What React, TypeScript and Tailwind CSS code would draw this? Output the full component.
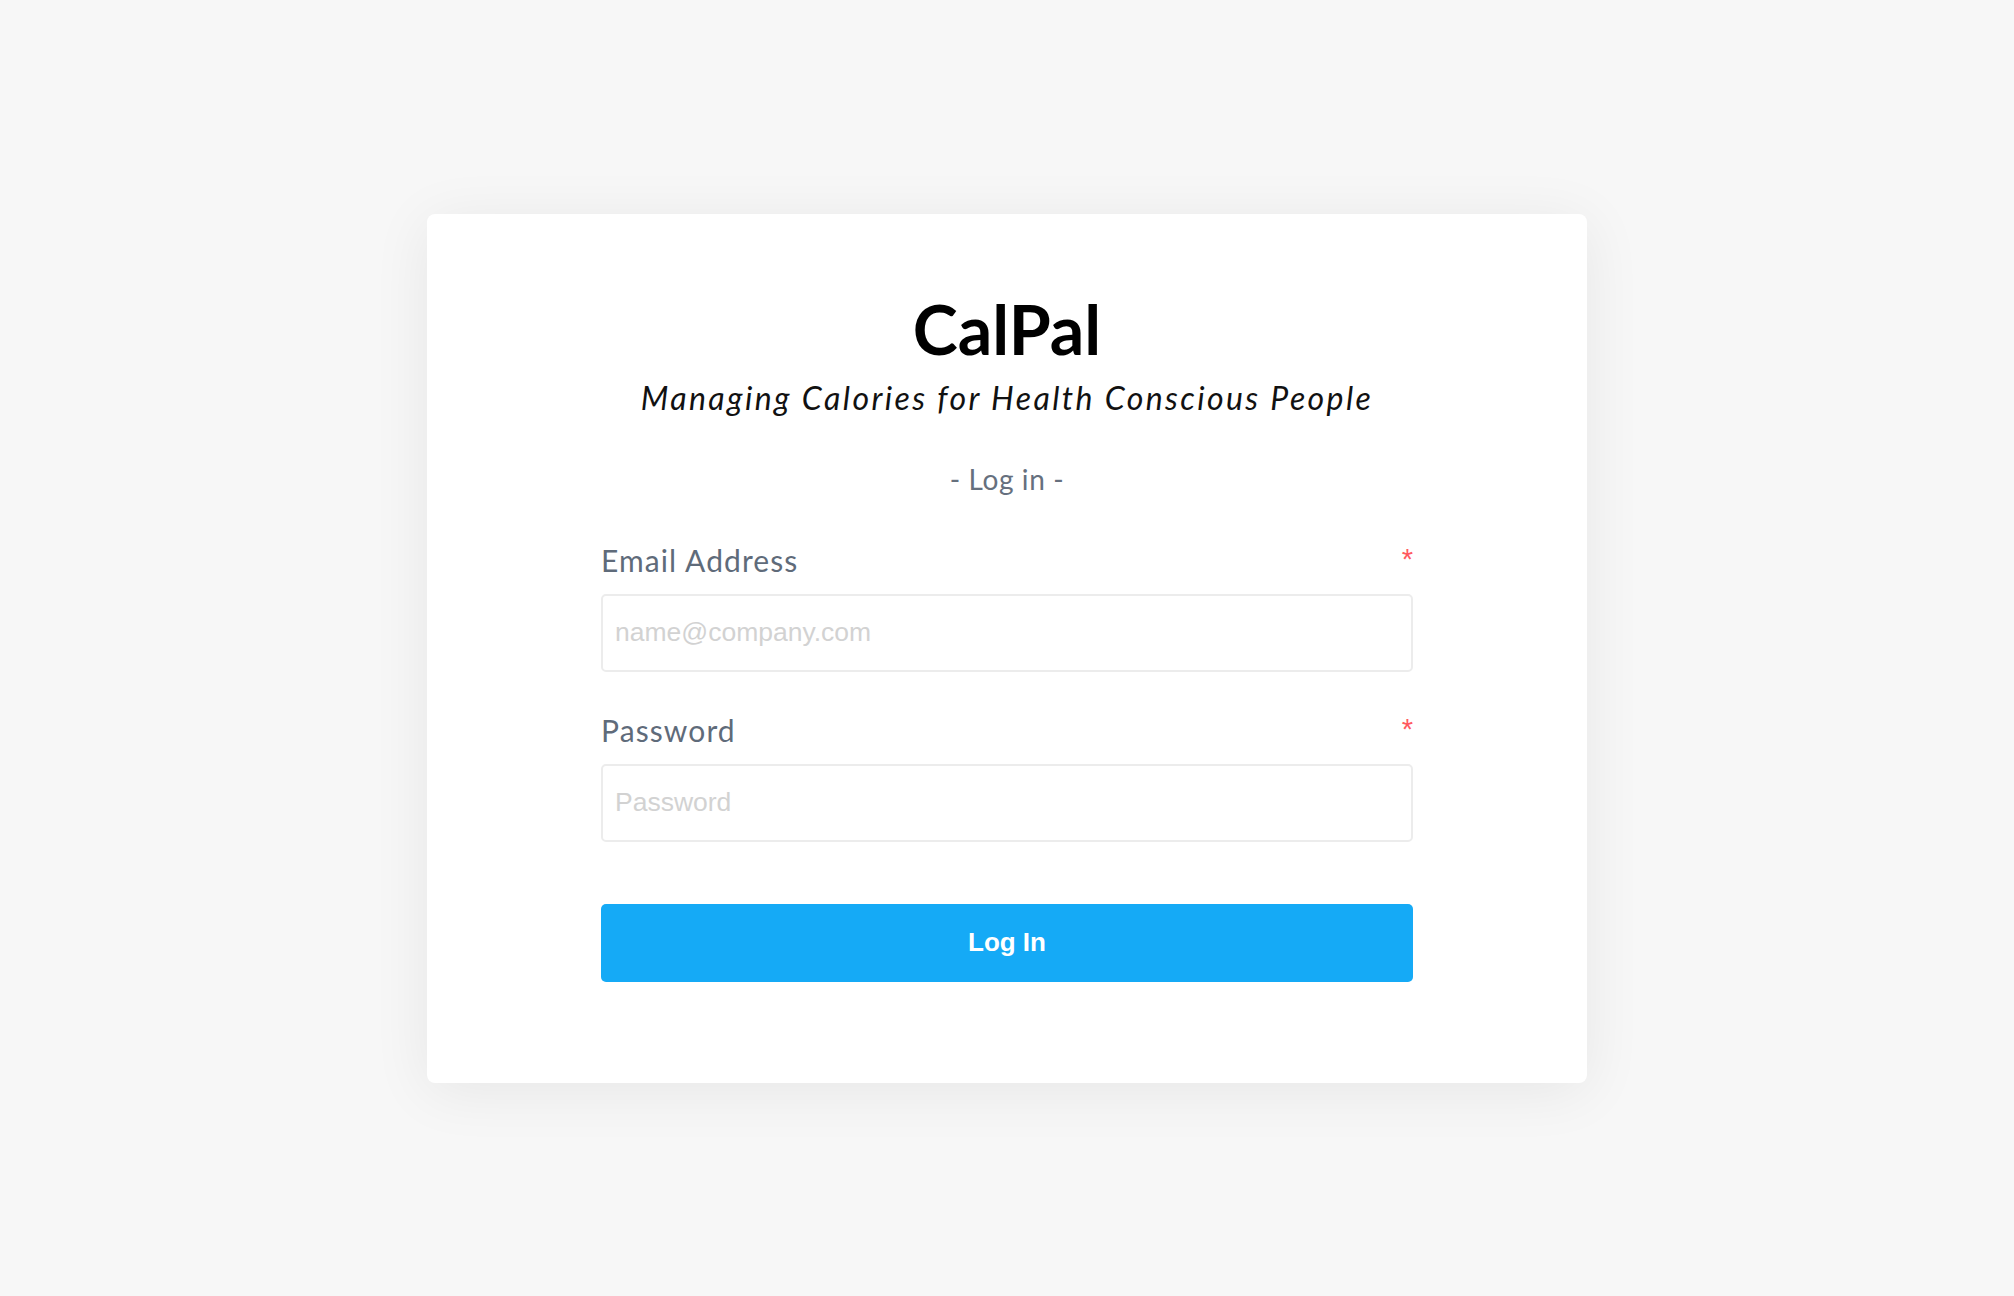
import React from "react";

function Field({ label, type, placeholder, className }: { label: string; type: string; placeholder: string; className: string }) {
  return (
    <div className={"flex flex-col " + className}>
      <div className="flex items-start justify-between h-[29px]">
        <label className="font-[Lato,sans-serif] text-[30px] leading-[29px] tracking-[1.1px] text-[#5f6b7a]">{label}</label>
        <span className="font-['Liberation_Sans',Arial,sans-serif] text-[29px] leading-[27px] text-[#ff5a5f]">*</span>
      </div>
      <input
        type={type}
        placeholder={placeholder}
        className="mt-[19px] h-[78px] w-full border-2 border-[#ececec] rounded-[5px] px-[12px] font-['Liberation_Sans',Arial,sans-serif] text-[26.5px] placeholder:text-[#d2d2d2] outline-none"
      />
    </div>
  );
}

export default function App() {
  return (
    <div className="min-h-screen w-full bg-[#f7f7f7] flex items-center justify-center">
      <div className="w-[1160px] h-[869px] bg-white rounded-[8px] shadow-[0_8px_60px_rgba(0,0,0,0.07)] px-[174px] pt-[81px] flex flex-col">
        <h1 className="font-[Lato,sans-serif] text-center text-[68px] leading-[68px] font-bold text-black">CalPal</h1>
        <p className="font-[Lato,sans-serif] mt-[19px] text-center text-[32px] leading-[31px] tracking-[2.4px] italic text-[#111]">
          Managing Calories for Health Conscious People
        </p>
        <p className="font-[Lato,sans-serif] mt-[52px] text-center text-[28px] leading-[28px] tracking-[0.6px] text-[#66707e]">
          - Log in -
        </p>

        <Field label="Email Address" type="email" placeholder="name@company.com" className="mt-[53px]" />
        <Field label="Password" type="password" placeholder="Password" className="mt-[44px]" />

        <button className="mt-[62px] h-[78px] w-full rounded-[5px] bg-[#15aaf6] text-white font-['Liberation_Sans',Arial,sans-serif] text-[26px] font-bold">
          Log In
        </button>
      </div>
    </div>
  );
}
